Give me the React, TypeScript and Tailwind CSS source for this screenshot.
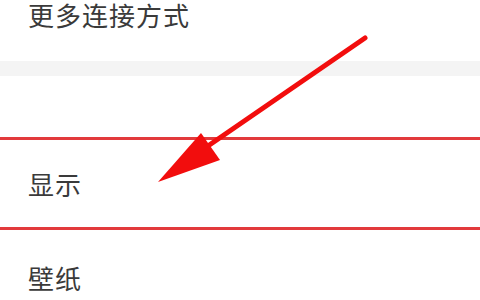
const font = { fontFamily: '"Noto Sans CJK SC", "Noto Sans", sans-serif' };

function Row({ label, className }: { label: string; className: string }) {
  return (
    <div className={`flex px-[28px] ${className}`}>
      <span className="text-[26px] leading-[30px] tracking-[1px] text-[#3a3a3a]">{label}</span>
    </div>
  );
}

export default function App() {
  return (
    <div className="relative h-[300px] w-[480px] overflow-hidden bg-white" style={font}>
      <Row label="更多连接方式" className="h-[61px] items-start" />
      <div className="h-[15px] bg-[#f4f4f4]" />
      <div className="h-[61px]" />
      <div className="h-[3px] bg-[#e23a3c]" />
      <Row label="显示" className="h-[87px] items-center" />
      <div className="h-[3px] bg-[#e23a3c]" />
      <Row label="壁纸" className="h-[70px] items-start pt-[33px]" />

      <svg className="pointer-events-none absolute left-0 top-0" width="480" height="300" viewBox="0 0 480 300">
        <line x1="365" y1="38" x2="205" y2="148" stroke="#f20d0d" strokeWidth="5" strokeLinecap="round" />
        <polygon points="158,182 201,133 220,160" fill="#f20d0d" />
      </svg>
    </div>
  );
}
